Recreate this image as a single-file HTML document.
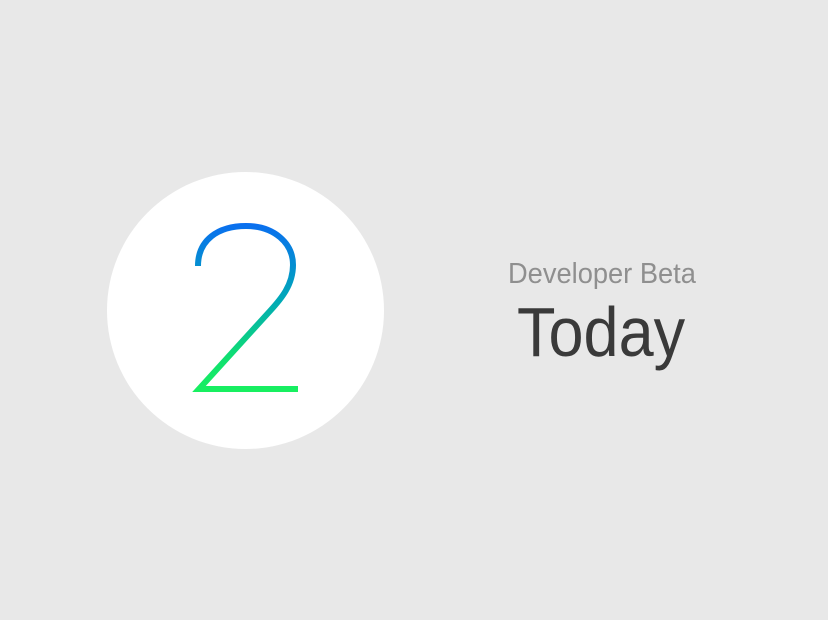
<!DOCTYPE html>
<html><head><style>
html,body{margin:0;padding:0;}
body{width:828px;height:620px;background:#e8e8e8;position:relative;overflow:hidden;font-family:"Liberation Sans",sans-serif;}
.c{position:absolute;left:107px;top:172px;width:277px;height:277px;border-radius:50%;background:#fff;}
.t1{position:absolute;left:508px;top:256px;font-size:29px;color:#8f8f8f;transform:scaleX(0.94);transform-origin:0 0;white-space:nowrap;line-height:36px;}
.t2{position:absolute;left:517px;top:292px;font-size:70px;color:#3a3a3a;transform:scaleX(0.9);transform-origin:0 0;white-space:nowrap;line-height:80px;}
</style></head><body>
<div class="c"></div>
<svg width="828" height="620" style="position:absolute;left:0;top:0">
<defs><linearGradient id="g" x1="0" y1="223" x2="0" y2="392" gradientUnits="userSpaceOnUse">
<stop offset="0" stop-color="#0a6ef0"/><stop offset="0.45" stop-color="#00a8b8"/><stop offset="0.8" stop-color="#10e070"/><stop offset="1" stop-color="#18f060"/></linearGradient></defs>
<path d="M198,266 C198,240 218,226 246,226 C274,226 293,243 293,265 C293,285 281,299 270,311 L199,389 L298,389" fill="none" stroke="url(#g)" stroke-width="6"/>
</svg>
<div class="t1">Developer Beta</div>
<div class="t2">Today</div>
</body></html>
